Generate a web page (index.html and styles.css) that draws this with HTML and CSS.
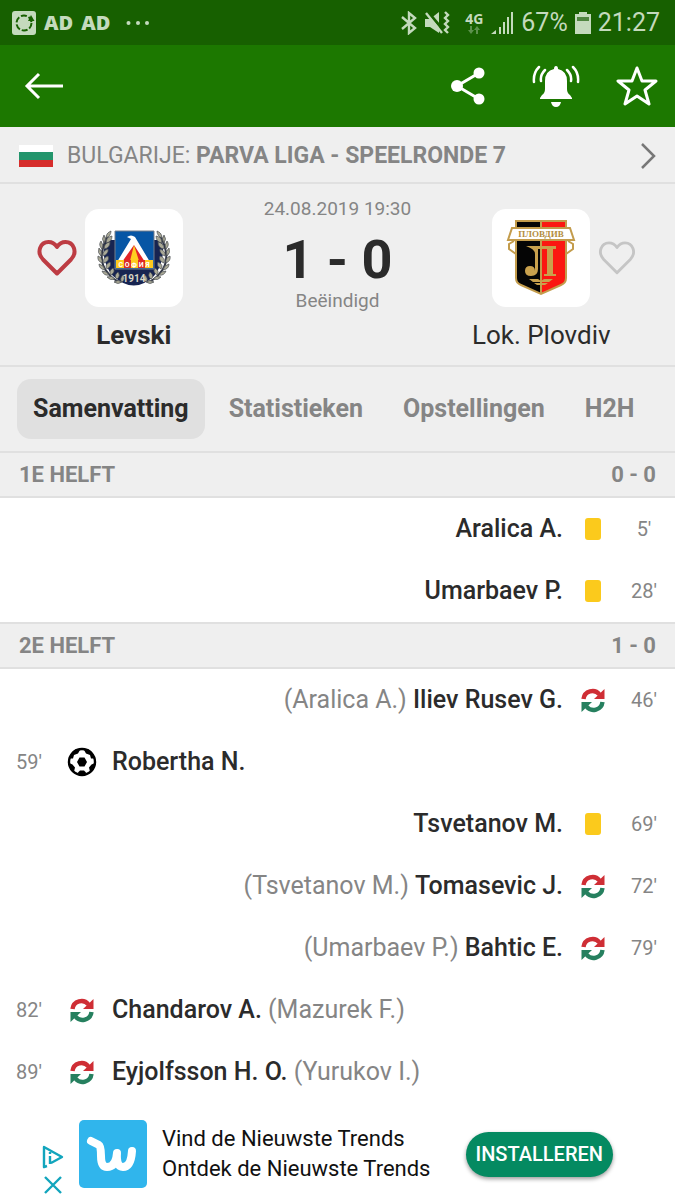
FILE: index.html
```html
<!DOCTYPE html>
<html lang="nl">
<head>
    <meta charset="UTF-8">
    <meta name="viewport" content="width=device-width, initial-scale=1.0">
    <title>Levski - Lok. Plovdiv</title>
    <link rel="stylesheet" href="styles.css">
</head>
<body>
    <!-- shared icons -->
    <svg class="sprite" aria-hidden="true">
        <symbol id="sub" viewBox="0 0 30 30">
            <path d="M5.500 14A9 9 0 0 1 21.500 9.500" fill="none" stroke="#cf2e35" stroke-width="4.400"/>
            <path d="M26.500 4v10H16z" fill="#cf2e35"/>
            <path d="M24.500 17A9 9 0 0 1 8.500 21.500" fill="none" stroke="#26805f" stroke-width="4.400"/>
            <path d="M3.500 27V17H14z" fill="#26805f"/>
        </symbol>
        <symbol id="card" viewBox="0 0 30 30">
            <rect x="7" y="4" width="16" height="22" rx="3" fill="#fbca1c"/>
        </symbol>
        <symbol id="ball" viewBox="0 0 30 30">
            <circle cx="15" cy="15" r="13" fill="#fff" stroke="#000" stroke-width="2.400"/>
            <path d="M12.500 10.500h5l2.500 4.500-2.500 4.500h-5L10 15zM5 5l4-3 4 1-2 3.500-4 1.500-1 3.500H3zM25 5l-4-3-4 1 2 3.500 4 1.500 1 3.500h3zM2 16l3.500 1.500 2.500 3-1 4-4-4zM28 16l-3.500 1.500-2.500 3 1 4 4-4zM11 25.500l2-2h4l2 2-1 3h-6z"/>
        </symbol>
        <symbol id="heart" viewBox="0 0 40 38">
            <path d="M20 34.500 6 20.500C-1 13 3.500 3 11.500 3c4 0 6.500 2 8.500 5 2-3 4.500-5 8.500-5C36.500 3 41 13 34 20.500z" fill="none" stroke="currentColor" stroke-linejoin="round"/>
        </symbol>
        <symbol id="branch" viewBox="0 0 40 60" overflow="visible">
            <path d="M12 2Q-2 28 11 42q6 8 13 9" fill="none" stroke="#333846" stroke-width="2"/>
            <g fill="#aaa996" stroke="#4b4f55" stroke-width=".7">
                <path d="M14 0q-5 2-5 7 5-2 5-7zM7 4q-3 4 0 8 3-4 0-8zM4 10q-3 4 1 8 2-4-1-8zM2 17q-2 5 2 8 2-5-2-8zM1 25q-1 5 4 7 1-5-4-7zM2 33q0 5 6 6-1-5-6-6zM5 40q2 5 7 4-2-4-7-4zM10 46q3 4 8 2-3-4-8-2zM17 51q4 3 8 0-4-3-8 0z"/>
                <path d="M15 5q-6 1-6 7 6-1 6-7zM13 11q-6 1-6 7 6-1 6-7zM11 18q-6 2-5 7 6-2 5-7zM11 25q-6 2-4 7 6-2 4-7zM13 31q-6 3-3 7 5-3 3-7zM16 37q-5 3-2 7 5-3 2-7zM21 41q-5 4-1 7 4-3 1-7zM26 44q-4 4-1 7 4-3 1-7z"/>
            </g>
        </symbol>
    </svg>

    <div class="status-bar">
        <div class="status-left">
            <svg width="24" height="24" viewBox="0 0 24 24" aria-hidden="true">
                <rect width="24" height="24" rx="3" fill="currentColor"/>
                <circle cx="12" cy="12" r="7.500" fill="none" stroke="#176000" stroke-width="2" stroke-dasharray="6 2"/>
                <path d="M16 10l3-6 3.500 6z" fill="#176000"/>
            </svg>
            <span class="ad-mark">AD</span>
            <span class="ad-mark">AD</span>
            <svg class="dots" width="24" height="6" viewBox="0 0 24 6" aria-hidden="true" fill="currentColor">
                <circle cx="2.500" cy="3" r="2"/><circle cx="12" cy="3" r="2"/><circle cx="21" cy="3" r="2"/>
            </svg>
        </div>
        <div class="status-right">
            <svg width="16" height="24" viewBox="0 0 16 24" aria-hidden="true" fill="none" stroke="currentColor" stroke-width="2.400">
                <path d="M1 6l13 11-6 5V2l6 5L1 18"/>
            </svg>
            <svg width="26" height="24" viewBox="0 0 26 24" aria-hidden="true" fill="none" stroke="currentColor" stroke-width="2.400">
                <path d="M1 8h5l9-7v21l-9-6H1z" fill="currentColor" stroke="none"/>
                <path d="M3 0l17 20" stroke="#176000" stroke-width="3"/>
                <path d="M2 2l16 20M21 1l3 3-3 3 3 3-3 3 3 3-3 3 3 3"/>
            </svg>
            <span class="network">4G
                <svg width="14" height="8" viewBox="0 0 14 8" aria-hidden="true" fill="currentColor">
                    <path d="M3 0h2v4h2L4 8 1 4h2zM9 8h2V4h2l-3-4-3 4h2z"/>
                </svg>
            </span>
            <svg width="24" height="24" viewBox="0 0 24 24" aria-hidden="true" fill="currentColor">
                <path d="M1 23l5-4v4zM9 16h2v7H9zM13 11h2v12h-2zM17 6h2v17h-2zM21 1h2v22h-2z"/>
            </svg>
            <span>67%</span>
            <svg width="16" height="24" viewBox="0 0 16 24" aria-hidden="true">
                <path d="M4 1h8v2h4v20H0V3h4z" fill="currentColor"/>
                <path d="M2 6h12v4H2z" fill="#4f8540"/>
            </svg>
            <span>21:27</span>
        </div>
    </div>

    <header class="app-bar">
        <button type="button" class="icon-btn" aria-label="Terug">
            <svg width="40" height="30" viewBox="0 0 40 30" fill="none" stroke="#fff" stroke-width="3">
                <path d="M39 15H3M15 3L3 15l12 12"/>
            </svg>
        </button>
        <div class="actions">
            <button type="button" class="icon-btn" aria-label="Delen">
                <svg width="46" height="40" viewBox="0 0 46 40" fill="#fff">
                    <path d="M29 7L7 20l22 13" fill="none" stroke="#fff" stroke-width="3"/>
                    <circle cx="29" cy="7" r="5.500"/><circle cx="7" cy="20" r="6"/><circle cx="29" cy="33" r="5.500"/>
                </svg>
            </button>
            <button type="button" class="icon-btn" aria-label="Meldingen">
                <svg width="48" height="42" viewBox="0 0 48 42" fill="#fff">
                    <path d="M22 4q0-3 2-3t2 3q9 2 9 12v8q0 4 3 6l2 3v1H8v-1l2-3q3-2 3-6v-8q0-10 9-12zM19 37h10q-1 5-5 5t-5-5z"/>
                    <path d="M7 2q-6 6-5 15M13 5q-5 5-4 11M41 2q6 6 5 15M35 5q5 5 4 11" fill="none" stroke="#fff" stroke-width="2.500" stroke-linecap="round"/>
                </svg>
            </button>
            <button type="button" class="icon-btn" aria-label="Favoriet">
                <svg width="42" height="42" viewBox="0 0 42 42" fill="none" stroke="#fff" stroke-width="3" stroke-linejoin="round">
                    <path d="M21 3l5 13h14L29 25l4 14-12-8-12 8 4-14L2 16h14z"/>
                </svg>
            </button>
        </div>
    </header>

    <main>
        <a class="league" href="#">
            <svg width="34" height="22" viewBox="0 0 34 22" aria-hidden="true">
                <path d="M0 0h34v8H0z" fill="#fff"/>
                <path d="M0 7h34v8H0z" fill="#23956c"/>
                <path d="M0 15h34v7H0z" fill="#d62d2b"/>
            </svg>
            <span class="league-name">BULGARIJE: <b>PARVA LIGA - SPEELRONDE 7</b></span>
            <svg width="18" height="28" viewBox="0 0 18 28" fill="none" stroke="#777" stroke-width="2.500" aria-hidden="true">
                <path d="M3 2l12 12L3 26"/>
            </svg>
        </a>

        <section class="match">
            <div class="team home">
                <div class="crest-row">
                    <button type="button" class="icon-btn fav fav-on" aria-label="Levski volgen">
                        <svg width="40" height="38"><use href="#heart"/></svg>
                    </button>
                    <div class="crest">
                        <svg width="98" height="98" viewBox="0 0 98 98" aria-hidden="true">
                            <path d="M20 31h57q4 21-8 36-20 19-41 0-13-15-8-36z" fill="#172451"/>
                            <use href="#branch" x="12" y="22" width="40" height="60"/>
                            <g transform="translate(98 0) scale(-1 1)"><use href="#branch" x="12" y="22" width="40" height="60"/></g>
                            <path d="M30 22h39v38H30z" fill="#0756a5" stroke="#777c88"/>
                            <path d="M49 35l14 17H36z" fill="#e12428"/>
                            <path d="M49 36l5 16h-9z" fill="#ffce20"/>
                            <path d="M42 28q4-3 8 0l15 25h-5L49 36 37 53h-5l14-23z" fill="#fff"/>
                            <path d="M31 51h37v8H31z" fill="#ffc91e"/>
                            <path d="M39 51h7v8h-7zM53 51h7v8h-7z" fill="#dc2c29"/>
                            <text class="crest-city" x="49" y="58">С О Ф И Я</text>
                            <text class="crest-year" x="49" y="73">1914</text>
                        </svg>
                    </div>
                </div>
                <div class="team-name"><b>Levski</b></div>
            </div>

            <div class="score-box">
                <div class="small">24.08.2019 19:30</div>
                <div class="score">1 - 0</div>
                <div class="small">Beëindigd</div>
            </div>

            <div class="team away">
                <div class="crest-row">
                    <div class="crest">
                        <svg width="98" height="98" viewBox="0 0 98 98" aria-hidden="true">
                            <path d="M24 12h25v73l-20-9q-5-2-5-7z" fill="#050505"/>
                            <path d="M49 12h25v57q0 5-5 7l-20 9z" fill="#fb1711"/>
                            <path d="M24 12h50v57q0 5-5 7l-20 9-20-9q-5-2-5-7zM49 12v73" fill="none" stroke="#c39c4c" stroke-width="2"/>
                            <path d="M22 32l-5 3v5l7 5M76 32l5 3v5l-7 5" fill="none" stroke="#c39c4c" stroke-width="2"/>
                            <path d="M20 19h58l4 12H16z" fill="#fff" stroke="#c39c4c" stroke-width="2"/>
                            <text class="crest-ribbon" x="49" y="28">ПЛОВДИВ</text>
                            <path d="M34 37h30v3h-3v25h3v2H52v-2h3V40h-9v20q0 7-7 7-6 0-6-5t5-5q5 0 5 5V45q0-5-9-8zM37 70h9l3 2 3-2h9l-4 3H41zM42 74h14l-3 2h-8z" fill="#c9a14d"/>
                        </svg>
                    </div>
                    <button type="button" class="icon-btn fav" aria-label="Lok. Plovdiv volgen">
                        <svg width="38" height="36"><use href="#heart"/></svg>
                    </button>
                </div>
                <div class="team-name">Lok. Plovdiv</div>
            </div>
        </section>

        <nav class="tabs">
            <a class="tab active" href="#">Samenvatting</a>
            <a class="tab" href="#">Statistieken</a>
            <a class="tab" href="#">Opstellingen</a>
            <a class="tab" href="#">H2H</a>
        </nav>

        <h2 class="period"><span>1E HELFT</span><span>0 - 0</span></h2>
        <ul class="events">
            <li class="event right"><span class="time">5'</span><svg class="icon"><use href="#card"/></svg><span><b>Aralica A.</b></span></li>
            <li class="event right"><span class="time">28'</span><svg class="icon"><use href="#card"/></svg><span><b>Umarbaev P.</b></span></li>
        </ul>

        <h2 class="period"><span>2E HELFT</span><span>1 - 0</span></h2>
        <ul class="events">
            <li class="event right"><span class="time">46'</span><svg class="icon"><use href="#sub"/></svg><span>(Aralica A.) <b>Iliev Rusev G.</b></span></li>
            <li class="event"><span class="time">59'</span><svg class="icon"><use href="#ball"/></svg><span><b>Robertha N.</b></span></li>
            <li class="event right"><span class="time">69'</span><svg class="icon"><use href="#card"/></svg><span><b>Tsvetanov M.</b></span></li>
            <li class="event right"><span class="time">72'</span><svg class="icon"><use href="#sub"/></svg><span>(Tsvetanov M.) <b>Tomasevic J.</b></span></li>
            <li class="event right"><span class="time">79'</span><svg class="icon"><use href="#sub"/></svg><span>(Umarbaev P.) <b>Bahtic E.</b></span></li>
            <li class="event"><span class="time">82'</span><svg class="icon"><use href="#sub"/></svg><span><b>Chandarov A.</b> (Mazurek F.)</span></li>
            <li class="event"><span class="time">89'</span><svg class="icon"><use href="#sub"/></svg><span><b>Eyjolfsson H. O.</b> (Yurukov I.)</span></li>
        </ul>
    </main>

    <aside class="ad">
        <div class="ad-controls">
            <button type="button" class="icon-btn" aria-label="Advertentie-informatie">
                <svg width="22" height="24" viewBox="0 0 22 24" fill="none" stroke="#12a5bd" stroke-width="2.400" stroke-linejoin="round">
                    <path d="M5 21l-3 1V2l18 10-11 6M8 11v8M8 7v2"/>
                </svg>
            </button>
            <button type="button" class="icon-btn" aria-label="Sluiten">
                <svg width="20" height="20" viewBox="0 0 20 20" fill="none" stroke="#12a5bd" stroke-width="2.400">
                    <path d="M2 2l16 16M18 2L2 18"/>
                </svg>
            </button>
        </div>
        <svg width="68" height="68" viewBox="0 0 68 68" aria-hidden="true">
            <rect width="68" height="68" rx="5" fill="#30b5ec"/>
            <path d="M12 21l8 4q2 1 2 11 0 11 6 11 9 0 10-14-1 14 6 14 8 0 9-16" fill="none" stroke="#fff" stroke-width="8" stroke-linecap="round" stroke-linejoin="round"/>
        </svg>
        <p class="ad-text">Vind de Nieuwste Trends<br>Ontdek de Nieuwste Trends</p>
        <button type="button" class="install">INSTALLEREN</button>
    </aside>
</body>
</html>
```

FILE: styles.css
```css
* {
    box-sizing: border-box;
}

body {
    margin: 0;
    font-family: Roboto, "Liberation Sans", sans-serif;
    font-size: 26px;
    line-height: 30px;
    color: #2b2b2b;
    background-color: #fff;
}

b {
    font-weight: 500;
}

svg {
    display: block;
    flex-shrink: 0;
}

a {
    color: inherit;
    text-decoration: none;
}

.sprite {
    position: absolute;
    width: 0;
    height: 0;
}

.icon-btn {
    padding: 0;
    border: none;
    background: none;
    cursor: pointer;
}

/* status bar */
.status-bar {
    display: flex;
    justify-content: space-between;
    align-items: center;
    height: 45px;
    padding: 0 15px 0 12px;
    background-color: #176000;
    color: #c4dabd;
    font-size: 25px;
}

.status-left, .status-right {
    display: flex;
    align-items: center;
    gap: 8px;
}

.ad-mark {
    font-family: "Open Sans", sans-serif;
    font-size: 20px;
    font-weight: 800;
}

.dots {
    margin-left: 8px;
}

.status-right {
    gap: 7px;
}

.network {
    font-family: "Open Sans", sans-serif;
    font-size: 14px;
    font-weight: 700;
    line-height: 14px;
    padding-left: 8px;
}

.network svg {
    margin: 0 auto;
    opacity: 0.4;
}

/* green bar */
.app-bar {
    display: flex;
    justify-content: space-between;
    align-items: center;
    height: 82px;
    padding: 0 17px 0 24px;
    background-color: #1c7800;
}

.actions {
    display: flex;
    align-items: center;
    gap: 36px;
}

/* league */
.league {
    display: flex;
    align-items: center;
    gap: 14px;
    height: 57px;
    padding: 2px 18px 0 19px;
    background-color: #efefef;
    border-bottom: 2px solid #e0e0e0;
    color: #858585;
    font-size: 23px;
}

.league-name {
    flex: 1;
}

.league b {
    font-weight: 700;
}

/* match */
.match {
    display: grid;
    grid-template-columns: 1fr 148px 1fr;
    height: 183px;
    padding: 25px 4px 0;
    background-color: #efefef;
    border-bottom: 2px solid #e0e0e0;
    text-align: center;
}

.crest-row {
    display: grid;
    grid-template-columns: 1fr 98px 1fr;
    align-items: center;
    gap: 8px;
}

.away .crest {
    grid-column: 2;
}

.crest {
    height: 98px;
    background-color: #fff;
    border-radius: 14px;
}

.fav {
    color: #c5c5c5;
    stroke-width: 3;
}

.fav-on {
    justify-self: end;
    color: #bd3c43;
    stroke-width: 4;
}

.away .fav {
    justify-self: start;
}

.crest-city, .crest-year, .crest-ribbon {
    fill: #fff;
    text-anchor: middle;
    font-size: 7px;
    font-weight: 700;
}

.crest-year {
    font-size: 10px;
    fill: #d8d5c4;
}

.crest-ribbon {
    font-family: "Liberation Serif", serif;
    font-size: 9px;
    fill: #b38d3f;
}

.team-name {
    margin-top: 13px;
}

.team-name b {
    font-weight: 700;
}

.small {
    font-size: 19px;
    line-height: 24px;
    color: #858585;
    white-space: nowrap;
}

.score-box {
    margin-top: -12px;
}

.score {
    padding-top: 10px;
    font-size: 54px;
    line-height: 58px;
    font-weight: 700;
    white-space: nowrap;
}

/* tabs */
.tabs {
    display: flex;
    gap: 8px;
    padding: 12px 17px;
    background-color: #efefef;
    font-size: 25px;
}

.tab {
    padding: 15px 16px;
    border-radius: 14px;
    color: #858585;
    font-weight: 700;
    white-space: nowrap;
}

.tab.active {
    background-color: #e0e0e0;
    color: #2b2b2b;
}

/* events */
.period {
    display: flex;
    justify-content: space-between;
    align-items: center;
    height: 47px;
    margin: 0;
    padding: 0 19px;
    background-color: #efefef;
    border-top: 2px solid #e0e0e0;
    border-bottom: 2px solid #e0e0e0;
    color: #858585;
    font-size: 22px;
    font-weight: 700;
}

.events {
    margin: 0;
    padding: 0;
    list-style: none;
}

.event {
    display: flex;
    align-items: center;
    gap: 15px;
    height: 62px;
    padding: 0 16px;
    color: #858585;
    font-size: 25px;
}

.event.right {
    flex-direction: row-reverse;
}

.event b {
    color: #2b2b2b;
}

.time {
    width: 36px;
    font-size: 20px;
    text-align: left;
}

.right .time {
    padding-left: 6px;
    text-align: center;
}

.icon {
    width: 30px;
    height: 30px;
}

/* ad */
.ad {
    display: flex;
    align-items: center;
    height: 98px;
    padding: 4px 62px 0 42px;
    gap: 15px;
    color: #111;
}

.ad-controls {
    display: flex;
    flex-direction: column;
    align-items: center;
    gap: 6px;
    padding-top: 32px;
}

.ad-text {
    flex: 1;
    margin: 0;
    font-size: 22px;
    white-space: nowrap;
}

.install {
    height: 45px;
    padding: 0 10px;
    border: none;
    border-radius: 23px;
    background-color: #048a61;
    color: #fff;
    font-family: inherit;
    font-size: 20px;
    font-weight: 500;
    box-shadow: 0 2px 4px rgba(0, 0, 0, 0.4);
    cursor: pointer;
}
```
